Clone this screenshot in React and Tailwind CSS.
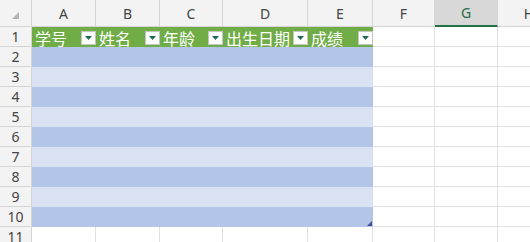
const cols = [
  { key: 'A', w: 'w-[64px]' },
  { key: 'B', w: 'w-[64px]' },
  { key: 'C', w: 'w-[63px]' },
  { key: 'D', w: 'w-[85px]' },
  { key: 'E', w: 'w-[65px]' },
];
const rest = [
  { key: 'F', w: 'w-[62px]' },
  { key: 'G', w: 'w-[63px]' },
  { key: 'H', w: 'w-[63px]' },
];
const heads = ['学号', '姓名', '年龄', '出生日期', '成绩'];

function FilterButton() {
  return (
    <div className="ml-auto flex h-[14px] w-[15px] shrink-0 items-center justify-center border border-[#c6c6c6] bg-white">
      <svg width="7" height="4" viewBox="0 0 7 4">
        <polygon points="0,0 7,0 3.5,4" fill="#1d6b57" />
      </svg>
    </div>
  );
}

function RowNum({ n }) {
  return (
    <div className="flex w-[32px] shrink-0 items-center justify-center border-r border-b border-[#d4d4d4] bg-[#f3f3f3] text-[14px] text-[#444]">
      {n}
    </div>
  );
}

function EmptyCells() {
  return rest.map((c) => (
    <div key={c.key} className={`${c.w} shrink-0 border-r border-b border-[#e1e1e1] bg-white`} />
  ));
}

export default function App() {
  const rows = [2, 3, 4, 5, 6, 7, 8, 9, 10];

  return (
    <div className="h-[242px] w-[530px] overflow-hidden bg-white font-['Noto_Sans','Noto_Sans_CJK_SC',sans-serif]">
      {/* column headers */}
      <div className="flex h-[27px]">
        <div className="flex w-[32px] shrink-0 items-end justify-end border-r border-b border-[#d4d4d4] bg-[#f3f3f3] pr-[12px] pb-[7px]">
          <svg width="7" height="7" viewBox="0 0 7 7">
            <polygon points="7,0 7,7 0,7" fill="#b3b3b3" />
          </svg>
        </div>
        {[...cols, ...rest].map((c) => (
          <div
            key={c.key}
            className={`${c.w} flex shrink-0 items-center justify-center border-r border-b border-[#d4d4d4] text-[14px] ${
              c.key === 'G'
                ? 'border-b-2 border-b-[#217346] bg-[#d8d8d8] text-[#1e6e42]'
                : 'bg-[#f3f3f3] text-[#444]'
            }`}
          >
            {c.key}
          </div>
        ))}
      </div>

      {/* row 1: table header */}
      <div className="flex h-[20px]">
        <RowNum n={1} />
        <div className="flex w-[341px] shrink-0 bg-[#70ad47]">
          {cols.map((c, i) => (
            <div key={c.key} className={`${c.w} flex shrink-0 items-center pl-[3px] pt-[1px]`}>
              <span className="font-['Noto_Sans_CJK_SC',sans-serif] text-[16px] leading-none text-white">{heads[i]}</span>
              <FilterButton />
            </div>
          ))}
        </div>
        <EmptyCells />
      </div>

      {/* banded rows */}
      {rows.map((n) => (
        <div key={n} className="flex h-[20px]">
          <RowNum n={n} />
          <div className={`relative w-[341px] shrink-0 ${n % 2 === 0 ? 'bg-[#b4c6e7]' : 'bg-[#d9e1f2]'}`}>
            {n === 10 && (
              <svg className="absolute right-[1px] bottom-[1px]" width="5" height="5" viewBox="0 0 5 5">
                <polygon points="5,0 5,5 0,5" fill="#3b4f9a" />
              </svg>
            )}
          </div>
          <EmptyCells />
        </div>
      ))}

      {/* row 11 */}
      <div className="flex h-[20px]">
        <RowNum n={11} />
        {cols.map((c) => (
          <div key={c.key} className={`${c.w} shrink-0 border-r border-b border-[#e1e1e1] bg-white`} />
        ))}
        <EmptyCells />
      </div>
    </div>
  );
}
